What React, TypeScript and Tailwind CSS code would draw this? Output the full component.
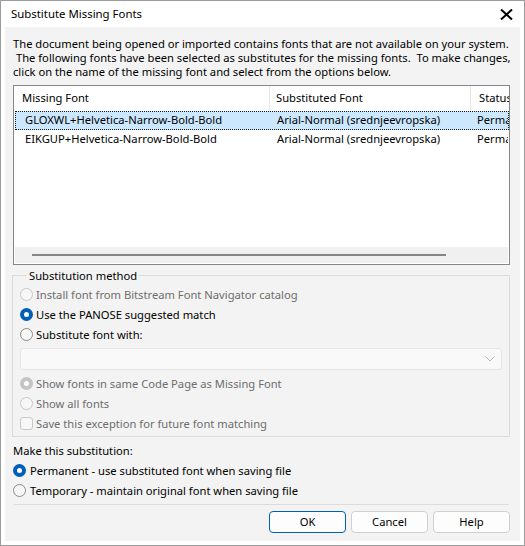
import React from "react";

const font = { fontFamily: '"Noto Sans", "Open Sans", sans-serif' };

function Radio({ checked, disabled }: { checked?: boolean; disabled?: boolean }) {
  if (checked && !disabled) {
    return (
      <span className="flex size-[13px] shrink-0 items-center justify-center rounded-full bg-[#005fb8]">
        <span className="size-[5px] rounded-full bg-white" />
      </span>
    );
  }
  if (checked && disabled) {
    return (
      <span className="flex size-[13px] shrink-0 items-center justify-center rounded-full bg-[#c5c5c5]">
        <span className="size-[5px] rounded-full bg-white" />
      </span>
    );
  }
  return (
    <span
      className={
        disabled
          ? "size-[13px] shrink-0 rounded-full border border-[#c8c8c8] bg-[#f7f7f7]"
          : "size-[13px] shrink-0 rounded-full border border-[#8a8a8a] bg-[#f7f7f7]"
      }
    />
  );
}

function Option({
  label,
  checked,
  disabled,
}: {
  label: string;
  checked?: boolean;
  disabled?: boolean;
}) {
  return (
    <div className="flex h-[20px] items-center gap-[3px]">
      <Radio checked={checked} disabled={disabled} />
      <span className={disabled ? "text-[#6d6d6d]" : "text-black"}>{label}</span>
    </div>
  );
}

function Button({ label, primary }: { label: string; primary?: boolean }) {
  return (
    <button
      className={
        primary
          ? "h-[22px] w-[77px] rounded-[4px] border border-[#005fb8] bg-[#fdfdfd] text-black"
          : "h-[22px] w-[77px] rounded-[4px] border border-[#d0d0d0] bg-[#fdfdfd] text-black"
      }
    >
      {label}
    </button>
  );
}

export default function App() {
  const rows = [
    { name: "GLOXWL+Helvetica-Narrow-Bold-Bold", sub: "Arial-Normal (srednjeevropska)", status: "Perma", selected: true },
    { name: "EIKGUP+Helvetica-Narrow-Bold-Bold", sub: "Arial-Normal (srednjeevropska)", status: "Perma" },
  ];

  return (
    <div
      style={font}
      className="flex h-[546px] w-[525px] flex-col border border-[#9c9c9c] bg-white text-[11.2px] leading-[14px] text-black"
    >
      {/* title bar */}
      <div className="flex h-[26px] shrink-0 items-center justify-between pl-[10px] pr-[11px]">
        <span className="text-[11.4px]">Substitute Missing Fonts</span>
        <svg width="13" height="11" viewBox="0 0 13 11" className="mt-[1px]">
          <path d="M1 0.5 L12 10.5 M12 0.5 L1 10.5" stroke="#000" strokeWidth="2" />
        </svg>
      </div>

      {/* client area */}
      <div className="mx-[4px] mb-[4px] flex flex-1 flex-col bg-[#f3f3f3]">
        <div className="pl-[8px] pt-[9.5px] leading-[14.33px]">
          <div className="whitespace-pre">The document being opened or imported contains fonts that are not available on your system.</div>
          <div className="whitespace-pre"> The following fonts have been selected as substitutes for the missing fonts.  To make changes,</div>
          <div className="whitespace-pre">click on the name of the missing font and select from the options below.</div>
        </div>

        {/* list view */}
        <div className="ml-[8px] mt-[5.5px] flex h-[180px] w-[497px] flex-col overflow-hidden border border-[#828790] bg-white">
          <div className="flex h-[25px] shrink-0 items-center">
            <div className="flex h-full w-[256px] items-center border-r border-[#e5e5e5] pl-[8px]">Missing Font</div>
            <div className="flex h-full w-[201px] items-center border-r border-[#e5e5e5] pl-[6px]">Substituted Font</div>
            <div className="flex h-full flex-1 items-center overflow-hidden whitespace-nowrap pl-[8px]">Status</div>
          </div>
          {rows.map((r) => (
            <div
              key={r.name}
              className={
                r.selected
                  ? "ml-[1px] flex h-[19px] shrink-0 items-center border border-dotted border-[#1a1a1a] bg-[#cce8ff]"
                  : "ml-[1px] flex h-[19px] shrink-0 items-center border border-transparent"
              }
            >
              <div className="w-[255px] shrink-0 whitespace-nowrap pl-[9px]">{r.name}</div>
              <div className="w-[201px] shrink-0 whitespace-nowrap pl-[6px]">{r.sub}</div>
              <div className="flex-1 overflow-hidden whitespace-nowrap pl-[5px]">{r.status}</div>
            </div>
          ))}
          <div className="flex-1" />
          <div className="mx-[1px] mb-[1px] flex h-[16px] shrink-0 items-center bg-[#f0f0f0]">
            <div className="ml-[17px] h-[2px] w-[414px] bg-[#858585]" />
          </div>
        </div>

        {/* substitution method */}
        <fieldset className="ml-[7px] mt-[4px] w-[498px] border border-[#dadada] pb-[2px] pl-[7px] pt-[2px]">
          <legend className="ml-[7px] px-[2px]">Substitution method</legend>
          <Option label="Install font from Bitstream Font Navigator catalog" disabled />
          <Option label="Use the PANOSE suggested match" checked />
          <Option label="Substitute font with:" />
          <div className="mt-[3px] flex h-[22px] w-[482px] items-center justify-end rounded-[3px] border border-[#e5e5e5] bg-[#f9f9f9] pr-[6px]">
            <svg width="10" height="6" viewBox="0 0 10 6">
              <path d="M0.5 0.5 L5 5 L9.5 0.5" fill="none" stroke="#b5b5b5" strokeWidth="1" />
            </svg>
          </div>
          <div className="mt-[4px]">
            <Option label="Show fonts in same Code Page as Missing Font" checked disabled />
            <Option label="Show all fonts" disabled />
            <div className="flex h-[20px] items-center gap-[3px]">
              <span className="size-[13px] shrink-0 rounded-[3px] border border-[#c8c8c8] bg-[#f7f7f7]" />
              <span className="text-[#6d6d6d]">Save this exception for future font matching</span>
            </div>
          </div>
        </fieldset>

        {/* make this substitution */}
        <div className="mt-[4px] pl-[8px]">
          <div className="flex h-[20px] items-center">Make this substitution:</div>
          <div className="flex h-[20px] items-center gap-[4px]">
            <Radio checked />
            <span>Permanent - use substituted font when saving file</span>
          </div>
          <div className="flex h-[20px] items-center gap-[4px]">
            <Radio />
            <span>Temporary - maintain original font when saving file</span>
          </div>
        </div>

        <div className="ml-[9px] mt-[3px] h-[1px] w-[495px] bg-[#dcdcdc]" />

        <div className="mr-[10px] mt-[6px] flex justify-end gap-[5px]">
          <Button label="OK" primary />
          <Button label="Cancel" />
          <Button label="Help" />
        </div>
      </div>
    </div>
  );
}
